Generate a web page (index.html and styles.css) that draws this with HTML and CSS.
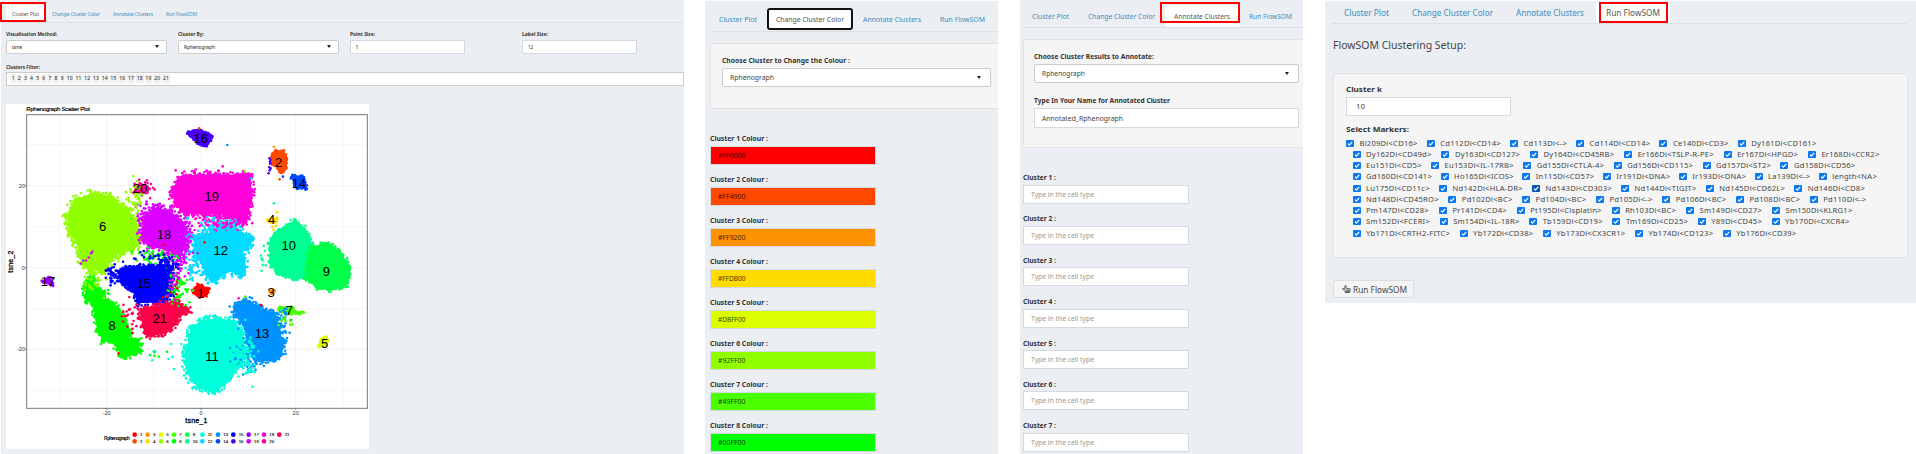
FILE: index.html
```html
<!DOCTYPE html>
<html lang="en">
<head>
<meta charset="utf-8">
<title>Cluster explorer</title>
<link rel="stylesheet" href="styles.css">
</head>
<body>
<main class="board">
  <section class="panel plot-panel">
    <nav class="tabs">
      <a class="tab active"><span class="fit" data-w="27">Cluster Plot</span><i class="mark"></i></a>
      <a class="tab"><span class="fit" data-w="48">Change Cluster Color</span></a>
      <a class="tab"><span class="fit" data-w="40">Annotate Clusters</span></a>
      <a class="tab"><span class="fit" data-w="31">Run FlowSOM</span></a>
    </nav>
    <div class="controls">
      <div class="control"><b class="label"><span class="fit" data-w="51">Visualisation Method:</span></b><div class="field select"><span class="fit" data-w="10">tsne</span></div></div>
      <div class="control"><b class="label"><span class="fit" data-w="26">Cluster By:</span></b><div class="field select"><span class="fit" data-w="31">Rphenograph</span></div></div>
      <div class="control"><b class="label"><span class="fit" data-w="25">Point Size:</span></b><div class="field short"><span>1</span></div></div>
      <div class="control"><b class="label"><span class="fit" data-w="26">Label Size:</span></b><div class="field short"><span class="fit" data-w="5">12</span></div></div>
    </div>
    <b class="label filter-label"><span class="fit" data-w="34">Clusters Filter:</span></b>
    <div class="field filter" id="chips"></div>
    <svg class="plot" id="plot" viewBox="18 309 1090 1035"></svg>
  </section>

  <section class="panel color-panel">
    <nav class="tabs">
      <a class="tab"><span class="fit" data-w="38">Cluster Plot</span></a>
      <a class="tab active"><span class="fit" data-w="68">Change Cluster Color</span></a>
      <a class="tab"><span class="fit" data-w="58">Annotate Clusters</span></a>
      <a class="tab"><span class="fit" data-w="45">Run FlowSOM</span></a>
    </nav>
    <div class="well">
      <b class="label"><span class="fit" data-w="128">Choose Cluster to Change the Colour :</span></b>
      <div class="field select"><span class="fit" data-w="44">Rphenograph</span></div>
    </div>
    <div class="list" id="colors"></div>
  </section>

  <section class="panel annotate-panel">
    <nav class="tabs">
      <a class="tab"><span class="fit" data-w="37">Cluster Plot</span></a>
      <a class="tab"><span class="fit" data-w="67">Change Cluster Color</span></a>
      <a class="tab active"><span class="fit" data-w="56">Annotate Clusters</span><i class="mark"></i></a>
      <a class="tab"><span class="fit" data-w="43">Run FlowSOM</span></a>
    </nav>
    <div class="well">
      <b class="label"><span class="fit" data-w="120">Choose Cluster Results to Annotate:</span></b>
      <div class="field select"><span class="fit" data-w="43">Rphenograph</span></div>
      <b class="label"><span class="fit" data-w="136">Type In Your Name for Annotated Cluster</span></b>
      <div class="field name"><span class="fit" data-w="81">Annotated_Rphenograph</span></div>
    </div>
    <div class="list" id="types"></div>
  </section>

  <section class="panel flow-panel">
    <nav class="tabs">
      <a class="tab"><span class="fit" data-w="45">Cluster Plot</span></a>
      <a class="tab"><span class="fit" data-w="81">Change Cluster Color</span></a>
      <a class="tab"><span class="fit" data-w="68">Annotate Clusters</span></a>
      <a class="tab active"><span class="fit" data-w="54">Run FlowSOM</span><i class="mark"></i></a>
    </nav>
    <h1 class="heading"><span class="fit" data-w="133">FlowSOM Clustering Setup:</span></h1>
    <div class="well">
      <b class="label"><span class="fit" data-w="36">Cluster k</span></b>
      <div class="field"><span class="fit" data-w="9">10</span></div>
      <b class="label"><span class="fit" data-w="63">Select Markers:</span></b>
      <div class="markers" id="markers"></div>
    </div>
    <div class="button">
      <svg class="hand" viewBox="0 0 16 16" preserveAspectRatio="none"><path d="M1 7l4 1.500V2c0-1.600 2.200-1.600 2.200 0v4.500l6 .5c2 .2 2 1.500 1.500 3l-1 3.500H6L2.500 10C1 8.500 1 7 1 7zM6 10h8M6.500 12h7M6 13.500v1.500h7.500v-1.500" fill="none" stroke="#444" stroke-width="1.500" stroke-linejoin="round"/></svg>
      <span class="fit" data-w="54">Run FlowSOM</span>
    </div>
  </section>
</main>
<script src="app.js"></script>
</body>
</html>
```
FILE: styles.css
```css
* { box-sizing: border-box; }
body { margin: 0; background: #fff; overflow: hidden; }
.board {
  display: flex; align-items: flex-start; width: 1916px; height: 454px; overflow: hidden;
  font: 7.400px/11px "Noto Sans", "Open Sans", sans-serif; color: #444;
}
.panel { flex: none; background: #ebeff4; height: 454px; overflow: hidden; }
.fit { display: inline-block; white-space: nowrap; transform-origin: 0 50%; }
.label { display: block; height: 10px; color: #333; }
.tabs { display: flex; border-bottom: 1px solid #dcdfe3; color: #3c8dbc; }
.tab { position: relative; display: flex; align-items: center; }
.tab.active { background: #fff; color: #555; }
.mark { position: absolute; border: 2px solid #f00; }
.field {
  display: flex; align-items: center; background: #fff;
  border: 1px solid #d5d9e0; color: #444; position: relative;
}
.select { border-radius: 2px; border-color: #ccc; justify-content: space-between; }
.select::after { content: ""; border: 2.5px solid transparent; border-top: 3px solid #222; border-bottom: 0; }
.well { background: #f5f5f5; border: 1px solid #e3e3e3; border-radius: 2px; }

/* scatter plot */
.plot-panel { width: 683px; margin-left: 1px; font-size: 5.400px; line-height: 8px; overflow: visible; }
.plot-panel .tabs { height: 23px; padding: 5px 0 0 5px; margin-right: 1px; }
.plot-panel .tab { padding: 0 6.500px; }
.plot-panel .tab.active { padding: 0 6px; }
.plot-panel .mark { left: -6px; top: -3px; width: 46px; height: 20px; }
.controls { display: flex; gap: 11px; padding: 7px 0 0 4.500px; }
.plot-panel .label { height: 7px; margin-left: .5px; }
.control { width: 161px; }
.control .field { height: 13.500px; margin-top: 3px; padding: 0 5px; color: #222; }
.control .select { padding-right: 7px; }
.control .short { width: 115px; }
.plot-panel .filter-label { margin: 9px 0 0 5px; }
.filter { height: 14px; margin: 2px 0 0 4.500px; padding: 0 4px; gap: 1px; border-color: #ccc; }
.chip { width: 5.150px; text-align: center; background: #efefef; line-height: 9px; color: #222; font-size: 5px; }
.chip.wide { width: 7.750px; }
.plot { display: block; width: 363.330px; height: 345px; margin: 18px 0 0 5px; background: #fff; font-family: "Liberation Sans", Arial, sans-serif; }

/* cluster colours */
.color-panel { width: 293px; height: 453px; margin: 1px 0 0 21px; }
.color-panel .tabs { margin: 0 0 0 5px; height: 31px; padding: 7px 0 0; }
.color-panel .tab { padding: 0 9.500px; height: 23px; }
.color-panel .tab:first-child { padding: 0 10px 0 9px; }
.color-panel .tab.active { border: 2px solid #111; border-radius: 3px; padding: 0 7px; background: #fff; height: 22px; }
.color-panel .well { height: 66px; width: 300px; margin: 11px 0 0 5px; padding: 11px 11px 0 10.500px; }
.color-panel .select { width: 269px; height: 19px; margin-top: 3px; padding: 0 9px 0 7px; }
.list { display: flex; flex-direction: column; }
.color-panel .list { margin: 23px 0 0 5px; }
.color-item { height: 41.040px; flex: none; }
.color-item .label { line-height: 12px; }
.color-item .field { width: 166px; height: 18.500px; margin-top: 4px; padding-left: 6.500px; color: #000000d0; font-size: 7px; }

/* annotations */
.annotate-panel { width: 283px; margin-left: 22px; }
.annotate-panel .tabs { height: 28px; margin-left: 3px; padding-top: 5px; }
.annotate-panel .tab { padding: 0 9.500px; }
.annotate-panel .tab:first-child { padding-left: 9px; }
.annotate-panel .mark { left: -4.500px; top: -3px; width: 80px; height: 21px; }
.annotate-panel .well { width: 290px; height: 109px; margin: 11px 0 0 3px; padding: 11px 0 0 10px; }
.annotate-panel .select { width: 265px; height: 19px; margin: 3px 0 12px; padding: 0 9px 0 7px; }
.annotate-panel .name { width: 265px; height: 20px; margin-top: 3px; padding-left: 7px; }
.annotate-panel .list { margin: 24px 0 0 3px; }
.type-item { height: 41.400px; flex: none; }
.type-item .field { width: 166px; height: 19px; margin-top: 2.500px; padding-left: 6.500px; color: #999; }

/* FlowSOM setup */
.flow-panel { width: 591px; height: 302px; margin: 1px 0 0 22px; }
.flow-panel .tabs { height: 23px; margin: 0 9px 0 7px; padding-top: 1px; font-size: 8.200px; }
.flow-panel .tab { padding: 0 11.500px; }
.flow-panel .tab:nth-child(3) { padding-right: 12.500px; }
.flow-panel .tab.active { padding: 0 10px; }
.flow-panel .mark { left: 3px; top: 0; width: 69px; height: 21px; }
.heading { margin: 13px 0 0 8px; height: 16px; font: 10.500px/16px "Noto Sans", sans-serif; }
.flow-panel .well { height: 185px; width: 575px; margin: 20px 0 0 7.500px; padding: 10px 12.500px; }
.flow-panel .field { width: 165px; height: 19px; margin: 3px 0 8px; padding-left: 8.500px; font-size: 7.500px; }
.markers { margin-top: 3.500px; font-size: 7.600px; letter-spacing: .23px; }
.marker-row { display: flex; justify-content: space-between; height: 11.280px; margin-left: 6.500px; }
.marker-row:first-child { margin-left: 0; }
.marker { display: flex; align-items: center; gap: 5.500px; white-space: nowrap; }
.check { width: 8px; height: 7px; background: #0b78f0; border-radius: 1px; display: block; flex: none; }
.check.hover { background: #0a56b8; }
.button {
  display: flex; align-items: center; gap: 2px; width: 81px; height: 18px; padding-left: 8px;
  margin: 22px 0 0 7.500px; background: #f4f4f4; border: 1px solid #ddd; border-radius: 1px; font-size: 8.200px;
}
.hand { width: 9px; height: 8px; }
```
FILE: app.js
```js
const byId = id => document.getElementById(id);

// filter chips
byId('chips').innerHTML = Array.from({ length: 21 }, (_, i) =>
  `<span class="chip${i > 8 ? ' wide' : ''}">${i + 1}</span>`).join('');

// colour fields
const hex = ['#FF0000', '#FF4900', '#FF9200', '#FFDB00', '#DBFF00', '#92FF00', '#49FF00', '#00FF00', '#00FF49', '#00FF92',
  '#00FFDB', '#00DBFF', '#0092FF', '#0049FF', '#0000FF', '#4900FF', '#9200FF', '#DB00FF', '#FF00DB', '#FF0092', '#FF0049'];
byId('colors').innerHTML = hex.slice(0, 8).map((c, i) =>
  `<div class="color-item"><b class="label"><span class="fit" data-w="58">Cluster ${i + 1} Colour :</span></b>
   <div class="field" style="background:${c}"><span class="fit" data-w="27.5">${c}</span></div></div>`).join('');

// cell type fields
byId('types').innerHTML = [1, 2, 3, 4, 5, 6, 7].map(n =>
  `<div class="type-item"><b class="label"><span class="fit" data-w="33">Cluster ${n} :</span></b>
   <div class="field"><span class="fit" data-w="63">Type in the cell type</span></div></div>`).join('');

// marker checkboxes: [row width, names]
const rows = [
  [470.5, 'Bi209Di<CD16> Cd112Di<CD14> Cd113Di<-> Cd114Di<CD14> Ce140Di<CD3> Dy161Di<CD161>'],
  [527, 'Dy162Di<CD49d> Dy163Di<CD127> Dy164Di<CD45RB> Er166Di<TSLP-R-PE> Er167Di<HPGD> Er168Di<CCR2>'],
  [503, 'Eu151Di<CD5> Eu153Di<IL-17RB> Gd155Di<CTLA-4> Gd156Di<CD115> Gd157Di<ST2> Gd158Di<CD56>'],
  [524.5, 'Gd160Di<CD141> Ho165Di<ICOS> In115Di<CD57> Ir191Di<DNA> Ir193Di<DNA> La139Di<-> length<NA>'],
  [512.5, 'Lu175Di<CD11c> Nd142Di<HLA-DR> Nd143Di<CD303> Nd144Di<TIGIT> Nd145Di<CD62L> Nd146Di<CD8>'],
  [514, 'Nd148Di<CD45RO> Pd102Di<BC> Pd104Di<BC> Pd105Di<-> Pd106Di<BC> Pd108Di<BC> Pd110Di<->'],
  [500, 'Pm147Di<CD28> Pr141Di<CD4> Pt195Di<Cisplatin> Rh103Di<BC> Sm149Di<CD27> Sm150Di<KLRG1>'],
  [497, 'Sm152Di<FCERI> Sm154Di<IL-18R> Tb159Di<CD19> Tm169Di<CD25> Y89Di<CD45> Yb170Di<CXCR4>'],
  [444, 'Yb171Di<CRTH2-FITC> Yb172Di<CD38> Yb173Di<CX3CR1> Yb174Di<CD123> Yb176Di<CD39>']
];
const esc = s => s.replace(/</g, '&lt;').replace(/>/g, '&gt;');
byId('markers').innerHTML = rows.map(([w, names]) =>
  `<div class="marker-row" style="width:${w}px">` + names.split(' ').map(n =>
    `<span class="marker"><svg class="check${n.startsWith('Nd143') ? ' hover' : ''}" viewBox="0 0 8 7"><path d="M2 3.600l1.400 1.500L6.200 1.800" fill="none" stroke="#fff" stroke-width="1.200"/></svg>${esc(n)}</span>`).join('') + '</div>').join('');

// scale labels horizontally to their column widths
document.querySelectorAll('.fit').forEach(el => {
  const w = +el.dataset.w, natural = el.getBoundingClientRect().width;
  el.style.width = w + 'px';
  el.style.transform = `scaleX(${w / natural})`;
});

// scatter plot
let seed = 7;
const rnd = () => {
  seed = (seed + 0x6D2B79F5) | 0;
  let t = Math.imul(seed ^ (seed >>> 15), 1 | seed);
  t = (t + Math.imul(t ^ (t >>> 7), 61 | t)) ^ t;
  return ((t ^ (t >>> 14)) >>> 0) / 4294967296;
};
const gauss = () => rnd() + rnd() + rnd() + rnd() - 2;
const dot = (x, y, c) => `<circle cx="${x.toFixed(1)}" cy="${y.toFixed(1)}" r="3.900" fill="${c}"/>`;
// cluster number, edge spread, edge dots, outline
const blobs = [
  [6, 13, 420, [285,574,330,593,380,622,408,660,418,730,395,746,350,760,322,782,316,808,270,808,252,785,232,730,210,690,204,640,222,602]],
  [19, 12, 420, [548,528,600,522,748,524,752,560,756,590,744,620,740,660,712,664,690,640,600,636,562,636,530,615,518,580,530,542]],
  [18, 16, 360, [438,640,470,620,516,638,552,665,562,710,552,745,535,760,500,745,462,738,432,722,428,680]],
  [12, 13, 340, [640,694,660,672,700,672,730,698,755,712,752,732,728,750,736,800,732,816,690,810,640,840,622,822,610,800,586,750,582,710]],
  [10, 7, 220, [885,660,918,690,933,730,930,800,920,830,880,834,832,815,812,788,810,732,828,692]],
  [9, 7, 220, [930,742,980,726,1018,752,1042,790,1050,820,1038,852,998,864,950,862,922,828,925,780]],
  [15, 9, 300, [360,808,400,800,470,796,505,800,515,830,512,875,498,900,412,905,405,868,360,842]],
  [8, 9, 260, [290,895,325,902,358,930,380,975,388,1002,372,1012,340,1020,310,1018,292,980,285,930]],
  [8, 10, 130, [345,1028,395,1015,418,1025,415,1050,370,1070]],
  [8, 11, 150, [258,845,275,830,285,855,315,878,310,900,275,905,258,890]],
  [21, 10, 240, [425,925,500,910,530,895,548,920,565,930,540,938,524,970,498,995,450,1004,428,978]],
  [1, 6, 70, [583,863,600,853,626,866,622,880,600,884,585,877]],
  [11, 12, 420, [582,978,600,963,640,956,698,960,726,990,733,1060,697,1112,676,1150,635,1172,594,1156,563,1118,556,1060,570,1010]],
  [13, 12, 380, [704,917,740,900,788,926,822,938,838,990,850,1040,830,1074,780,1080,750,1052,740,990,714,945]],
  [16, 2, 50, [560,395,595,385,638,405,625,430,612,437,595,428]],
  [2, 3, 60, [825,450,850,450,860,470,858,505,845,517,832,500,810,485,817,465]],
  [14, 5, 50, [876,523,910,527,918,562,895,563,882,550]],
  [20, 10, 55, [408,556,425,548,436,560,430,570,412,572]],
  [4, 2, 14, [800,655,832,652,832,663,815,667]],
  [17, 5, 20, [128,840,145,828,155,840,161,852,150,850,140,848]],
  [3, 2, 8, [805,870,820,867,826,873,813,878]],
  [7, 5, 38, [838,921,870,917,890,932,912,934,880,937,860,940,842,933]],
  [5, 2, 18, [975,1005,986,1018,975,1037,955,1037,962,1017]]
];
let out = '<g stroke="#ededed" stroke-width="2">';
[178, 461, 744, 1029].forEach(x => out += `<path d="M${x} 341V1222" stroke-width="1.500"/>`);
[320, 603, 887].forEach(x => out += `<path d="M${x} 341V1222"/>`);
[432, 677, 923, 1168].forEach(y => out += `<path d="M80 ${y}H1102" stroke-width="1.500"/>`);
[554, 800, 1045].forEach(y => out += `<path d="M80 ${y}H1102"/>`);
out += '</g>';
blobs.forEach(([n, spread, count, p]) => {
  const c = hex[n - 1], m = p.length / 2;
  out += `<polygon points="${p.join(' ')}" fill="${c}" stroke="${c}" stroke-width="4" stroke-linejoin="round"/>`;
  const segs = [];
  let total = 0;
  for (let i = 0; i < m; i++) {
    const j = (i + 1) % m;
    const s = [p[2 * i], p[2 * i + 1], p[2 * j], p[2 * j + 1]];
    const len = Math.hypot(s[2] - s[0], s[3] - s[1]);
    total += len; segs.push([s, len]);
  }
  for (let k = 0; k < count; k++) {
    let d = rnd() * total, i = 0;
    while (d > segs[i][1] && i < m - 1) d -= segs[i++][1];
    const [s, len] = segs[i], t = d / len;
    out += dot(s[0] + (s[2] - s[0]) * t + gauss() * spread, s[1] + (s[3] - s[1]) * t + gauss() * spread, c);
  }
});
// sparse transition areas: cluster, centre, half extents, count
[[19,660,660,70,25,110],[12,660,680,70,28,50],[18,540,775,30,40,70],[18,440,640,30,35,30],[8,470,765,45,18,50],[6,405,605,22,45,45],
 [8,535,860,28,45,60],[1,520,850,30,40,10],[21,395,950,25,45,28],[13,735,1075,38,40,55],[11,735,1055,28,65,90],[8,470,1060,40,25,8],
 [6,285,835,30,35,40],[18,525,840,18,45,26],[15,340,820,24,30,40],[15,505,790,30,18,60],[13,850,960,18,45,30],[16,808,475,5,30,7],
 [20,450,560,30,25,12],[12,580,790,25,45,40],[11,480,1050,40,30,5],[7,855,960,20,12,10],[10,790,770,12,45,8],[4,820,670,10,25,6],
 [18,255,770,30,35,6],[15,450,770,40,15,16]].forEach(([n, x, y, a, b, k]) => {
  while (k--) out += dot(x + gauss() * a, y + gauss() * b, hex[n - 1]);
});
[[597,382,2],[682,432,13],[822,438,3],[839,535,2],[822,607,10],[831,634,4],[614,724,1],[491,731,1],[735,511,6],[754,532,12],[668,496,19],[527,508,19],[784,912,1],[736,887,7],[716,892,19],[522,1104,11],[356,1057,1],[809,508,16],[849,527,14]]
  .forEach(([x, y, n]) => out += dot(x, y, hex[n - 1]));
out += '<rect x="80" y="341" width="1022" height="881" fill="none" stroke="#777" stroke-width="3"/>';
out += '<g font-size="39" text-anchor="middle" fill="#000">';
[[16,602,412],[2,836,485],[14,897,547],[20,420,561],[19,635,586],[4,815,656],[6,308,677],[18,492,700],[12,662,749],[10,866,733],[9,979,810],[17,144,842],[15,431,846],[1,602,876],[3,813,873],[7,868,929],[8,336,972],[21,479,951],[13,786,997],[11,636,1066],[5,974,1027]]
  .forEach(([n, x, y]) => out += `<text x="${x}" y="${y + 14}">${n}</text>`);
out += '</g><text x="79" y="330" font-size="18" textLength="191" fill="#000" stroke="#000" stroke-width=".5">Rphenograph Scatter Plot</text>';
out += '<g font-size="17" fill="#333" text-anchor="middle"><text x="320" y="1242">-20</text><text x="603" y="1242">0</text><text x="887" y="1242">20</text><text x="66" y="560">20</text><text x="70" y="806">0</text><text x="63" y="1051">-20</text></g>';
out += '<path d="M320 1222v5M603 1222v5M887 1222v5M80 554h-5M80 800h-5M80 1045h-5" stroke="#555" stroke-width="2"/>';
out += '<g font-size="21" fill="#000" stroke="#000" stroke-width=".8" text-anchor="middle"><text x="589" y="1267" textLength="66">tsne_1</text><text transform="translate(39 782) rotate(-90)" textLength="66">tsne_2</text></g>';
out += '<text x="312" y="1316" font-size="15" textLength="77" stroke="#000" stroke-width=".4">Rphenograph</text><g font-size="13" stroke="#000" stroke-width=".3">';
[404, 443, 483, 522, 562, 607, 654, 700, 746, 792, 838].forEach((x, i) => [0, 1].forEach(r => {
  const n = 2 * i + r + 1;
  if (n < 22) out += `<circle cx="${x}" cy="${1301 + 20 * r}" r="7" fill="${hex[n - 1]}" stroke="none"/><text x="${x + 16}" y="${1306 + 20 * r}">${n}</text>`;
}));
byId('plot').innerHTML = out + '</g>';
```
